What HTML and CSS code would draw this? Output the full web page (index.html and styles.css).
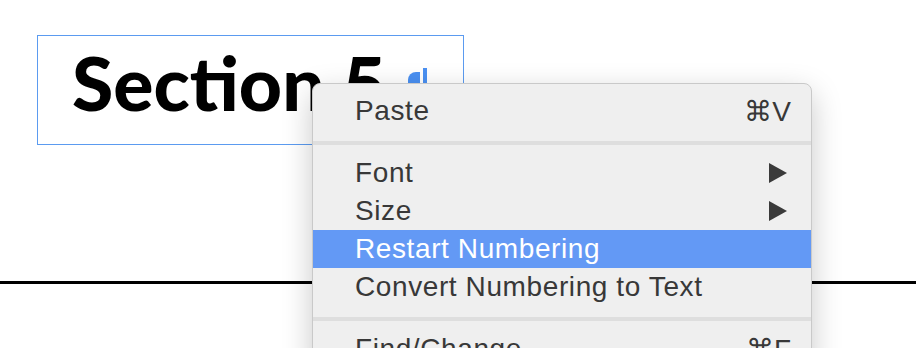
FILE: index.html
```html
<!DOCTYPE html>
<html lang="en">
<head>
    <meta charset="UTF-8">
    <title>Section 5 - context menu</title>
    <link rel="stylesheet" href="styles.css">
</head>
<body>

<div class="page">
    <!-- heading frame, selected -->
    <div class="frame">
        <span class="heading">Section 5</span>
        <svg class="pilcrow" width="22" height="18" viewBox="0 0 22 18">
            <path d="M13 4 H9 A8 8 0 0 0 1 12 V18 H13 Z" fill="#4a90f2"/>
            <rect x="16" y="0" width="4" height="18" fill="#4a90f2"/>
        </svg>
    </div>

    <div class="rule"></div>

    <!-- context menu -->
    <div class="menu">
        <div class="item"><span>Paste</span><span class="key">&#8984;V</span></div>
        <div class="sep"></div>
        <div class="item"><span>Font</span><span class="arrow"></span></div>
        <div class="item"><span>Size</span><span class="arrow"></span></div>
        <div class="item active"><span>Restart Numbering</span></div>
        <div class="item"><span>Convert Numbering to Text</span></div>
        <div class="sep"></div>
        <div class="item"><span>Find/Change...</span><span class="key">&#8984;F</span></div>
    </div>
</div>

</body>
</html>
```

FILE: styles.css
```css
html, body {
    margin: 0;
    padding: 0;
    background-color: #fff;
}

.page {
    position: relative;
    width: 916px;
    height: 348px;
    overflow: hidden;
    padding-top: 35px;
    box-sizing: border-box;
}

.frame {
    position: relative;
    margin-left: 37px;
    width: 425px;
    height: 108px;
    border: 1px solid #5b9bf0;
    box-sizing: content-box;
}

.heading {
    position: absolute;
    left: 34px;
    top: 1px;
    font-family: "Lato", "Liberation Sans", sans-serif;
    font-weight: 900;
    font-size: 75px;
    line-height: 90px;
    color: #000;
}

.pilcrow {
    position: absolute;
    left: 369px;
    top: 32px;
}

.rule {
    margin-top: 136px;
    height: 3px;
    background-color: #000;
}

.menu {
    position: absolute;
    left: 312px;
    top: 83px;
    width: 498px;
    padding-top: 8px;
    background-color: #efefef;
    border: 1px solid #c9c9c9;
    border-radius: 8px;
    box-shadow: 0 10px 30px rgba(0, 0, 0, 0.22);
    font-family: "Liberation Sans", Arial, sans-serif;
    font-size: 28px;
    letter-spacing: 0.6px;
    color: #383838;
}

.item {
    display: flex;
    justify-content: space-between;
    align-items: center;
    height: 38px;
    padding: 0 20px 0 42px;
}

.item.active {
    background-color: #6399f5;
    color: #fff;
}

.key {
    letter-spacing: 0;
}

.arrow {
    width: 0;
    height: 0;
    margin-right: 4px;
    border-left: 18px solid #3a3a3a;
    border-top: 10px solid transparent;
    border-bottom: 10px solid transparent;
}

.sep {
    height: 4px;
    margin: 11px 0 9px;
    background-color: #dedede;
}
```
